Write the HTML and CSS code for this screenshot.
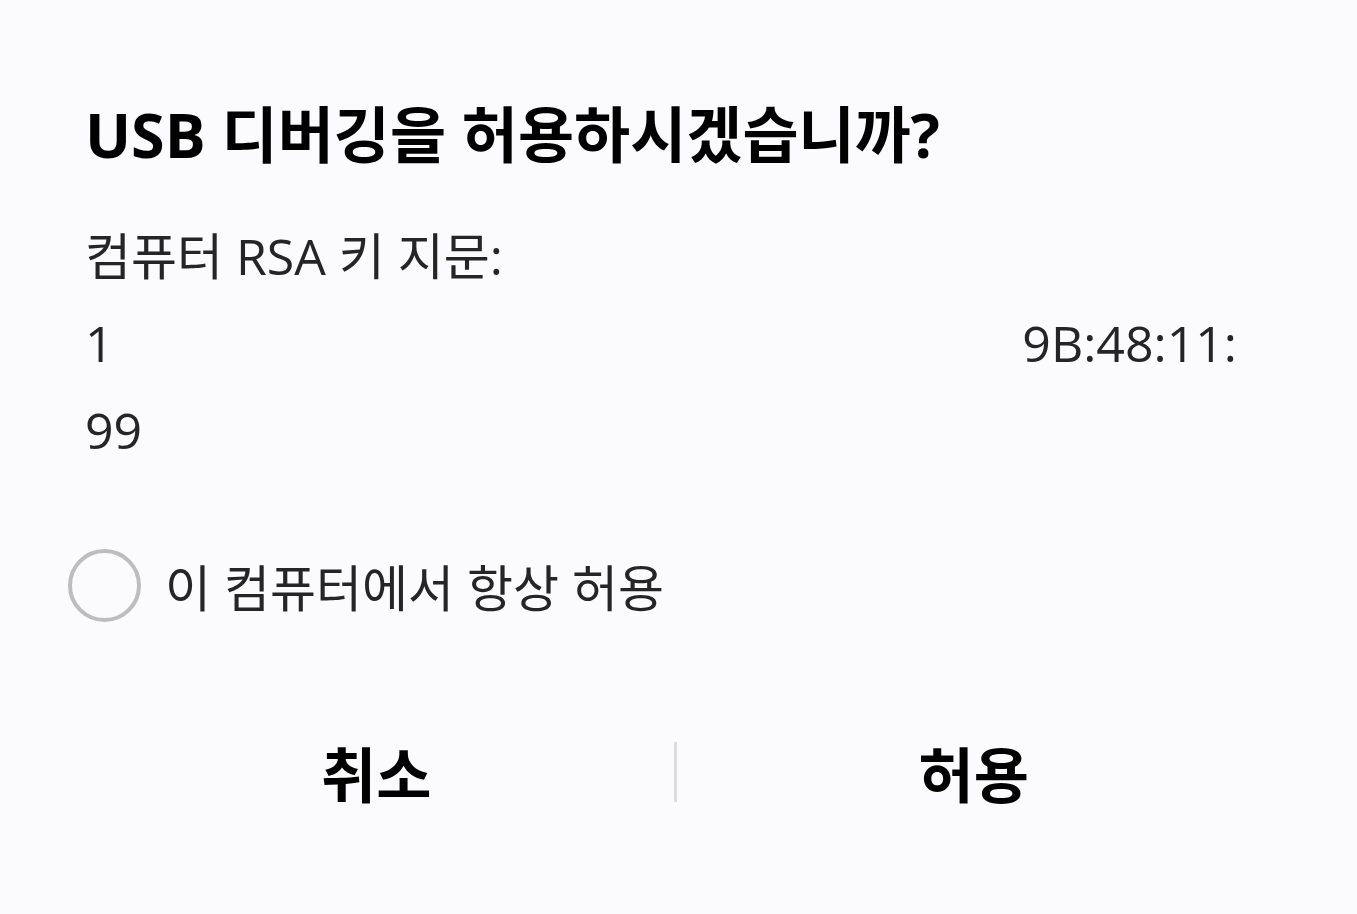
FILE: index.html
```html
<!DOCTYPE html>
<html lang="ko">
<head>
    <meta charset="UTF-8">
    <meta name="viewport" content="width=device-width, initial-scale=1.0">
    <title>USB 디버깅</title>
    <link rel="stylesheet" href="styles.css">
</head>
<body>
    <div class="dialog">
        <h1 class="title">USB 디버깅을 허용하시겠습니까?</h1>
        <p class="label">컴퓨터 RSA 키 지문:</p>
        <div class="fingerprint">
            <span>1</span>
            <span>9B:48:11:</span>
        </div>
        <p class="fingerprint-end">99</p>
        <label class="check">
            <span class="circle"></span>
            <span>이 컴퓨터에서 항상 허용</span>
        </label>
        <div class="buttons">
            <button type="button">취소</button>
            <span class="divider"></span>
            <button type="button">허용</button>
        </div>
    </div>
</body>
</html>
```

FILE: styles.css
```css
body {
    margin: 0;
    background-color: #fbfbfd;
    font-family: "Open Sans", "Noto Sans CJK KR", sans-serif;
    color: #252525;
}
.dialog {
    padding: 92px 0 0;
}
.title {
    margin: 0 0 0 85px;
    font-size: 61px;
    font-weight: 700;
    color: #000000;
    line-height: 86px;
}
.label {
    margin: 35px 0 0 85px;
    font-size: 50px;
    line-height: 87px;
}
.fingerprint {
    display: flex;
    justify-content: space-between;
    margin: 0 120px 0 85px;
    font-size: 50px;
    line-height: 87px;
}
.fingerprint-end {
    margin: 0 0 0 85px;
    font-size: 50px;
    line-height: 87px;
}
.check {
    display: flex;
    align-items: center;
    gap: 24px;
    margin: 75px 0 0 68px;
    font-size: 50px;
}
.circle {
    width: 65px;
    height: 65px;
    border: 4px solid #bdbdbd;
    border-radius: 50%;
}
.buttons {
    display: flex;
    align-items: center;
    margin: 106px 86px 0 79px;
}
.buttons button {
    flex: 1;
    background: none;
    border: none;
    font-family: inherit;
    font-size: 60px;
    font-weight: 700;
    color: #000000;
    padding: 0;
    cursor: pointer;
}
.divider {
    width: 3px;
    height: 60px;
    background-color: #dcdcdc;
}
```
